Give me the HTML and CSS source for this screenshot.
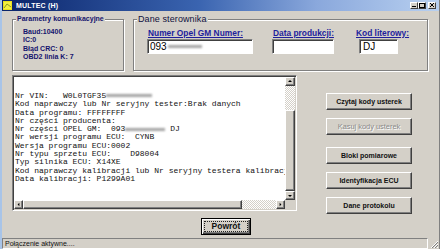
FILE: index.html
```html
<!DOCTYPE html>
<html lang="pl">
<head>
    <meta charset="utf-8">
    <title>MULTEC (H)</title>
    <link rel="stylesheet" href="styles.css">
</head>
<body>
    <div class="window">
        <div class="titlebar">
            <svg class="app-icon" width="9" height="9" viewBox="0 0 9 9">
                <rect x="0" y="0" width="9" height="9" fill="#e8e020"/>
                <rect x="1" y="1" width="7" height="7" fill="#f4f040"/>
                <path d="M1 7 L4 3 L8 6" stroke="#8a9a20" stroke-width="1" fill="none"/>
            </svg>
            <span class="title">MULTEC (H)</span>
            <div class="caption-buttons">
                <div class="cap-btn"><svg width="8" height="7" viewBox="0 0 8 7"><rect x="2" y="4" width="4" height="1" fill="#000"/></svg></div>
                <div class="cap-btn"><svg width="8" height="7" viewBox="0 0 8 7"><rect x="1.5" y="1.5" width="5" height="4" fill="none" stroke="#000"/><rect x="1" y="1" width="6" height="1" fill="#000"/></svg></div>
                <div class="cap-btn close"><svg width="8" height="7" viewBox="0 0 8 7"><path d="M2 1 L6 5 M6 1 L2 5" stroke="#000" stroke-width="1"/></svg></div>
            </div>
        </div>

        <div class="main">
            <div class="top-row">
                <fieldset class="group params">
                    <legend>Parametry komunikacyjne</legend>
                    <div class="params-list">
                        <p>Baud:10400</p>
                        <p>IC:0</p>
                        <p>Błąd CRC: 0</p>
                        <p>OBD2 linia K: 7</p>
                    </div>
                </fieldset>
                <fieldset class="group ecu">
                    <legend>Dane sterownika</legend>
                    <div class="ecu-fields">
                        <div class="field f-number">
                            <label>Numer Opel GM Numer:</label>
                            <div class="edit">093<span class="blur wide"></span></div>
                        </div>
                        <div class="field f-date">
                            <label>Data produkcji:</label>
                            <div class="edit"></div>
                        </div>
                        <div class="field f-code">
                            <label>Kod literowy:</label>
                            <div class="edit">DJ</div>
                        </div>
                    </div>
                </fieldset>
            </div>

            <div class="middle-row">
                <div class="left-col">
                    <div class="output">
                        <pre class="output-text">Nr VIN:   W0L0TGF35<span class="blur mono"></span>
Kod naprawczy lub Nr seryjny tester:Brak danych
Data programu: FFFFFFFF
Nr części producenta:
Nr części OPEL GM:  093<span class="blur mono short"></span> DJ
Nr wersji programu ECU:  CYNB
Wersja programu ECU:0002
Nr typu sprzetu ECU:    D98004
Typ silnika ECU: X14XE
Kod naprawczy kalibracji lub Nr seryjny testera kalibracji
Data kalibracji: P1299A01</pre>
                        <div class="vscroll">
                            <div class="arrow"><svg width="8" height="7" viewBox="0 0 8 7"><path d="M4 2 L6 4 L2 4 Z" fill="#000"/></svg></div>
                            <div class="track v-track-top"></div>
                            <div class="thumb"></div>
                            <div class="arrow"><svg width="8" height="7" viewBox="0 0 8 7"><path d="M2 3 L6 3 L4 5 Z" fill="#000"/></svg></div>
                        </div>
                        <div class="hscroll">
                            <div class="arrow"><svg width="8" height="7" viewBox="0 0 8 7"><path d="M5 1.5 L5 5.5 L3 3.5 Z" fill="#000"/></svg></div>
                            <div class="thumb"></div>
                            <div class="track h-track"></div>
                            <div class="arrow"><svg width="8" height="7" viewBox="0 0 8 7"><path d="M3 1.5 L3 5.5 L5 3.5 Z" fill="#000"/></svg></div>
                        </div>
                        <div class="corner"></div>
                    </div>
                    <div class="bottom-row">
                        <button class="win-btn default-btn"><span>Powrót</span></button>
                    </div>
                </div>

                <div class="actions">
                    <button class="win-btn">Czytaj kody usterek</button>
                    <button class="win-btn disabled">Kasuj kody usterek</button>
                    <button class="win-btn gap-big">Bloki pomiarowe</button>
                    <button class="win-btn">Identyfikacja ECU</button>
                    <button class="win-btn">Dane protokolu</button>
                </div>
            </div>
        </div>

        <div class="statusbar">
            <div class="status-panel">Połączenie aktywne....</div>
            <svg class="grip" width="10" height="10" viewBox="0 0 10 10">
                <path d="M9 2 L2 9 M9 5 L5 9 M9 8 L8 9" stroke="#fff" stroke-width="1"/>
                <path d="M9 3 L3 9 M9 6 L6 9" stroke="#808080" stroke-width="1"/>
            </svg>
        </div>
    </div>
</body>
</html>
```

FILE: styles.css
```css
body {
    margin: 0;
    background-color: #8fb0dc;
    font-family: 'Liberation Sans', Arial, sans-serif;
}

.window {
    width: 440px;
    height: 249px;
    box-sizing: border-box;
    background-color: #d4d0c8;
    border-left: 2px solid #a8c4e8;
    border-right: 1px solid #808080;
    display: flex;
    flex-direction: column;
    overflow: hidden;
}

/* title bar */
.titlebar {
    height: 11px;
    flex: none;
    display: flex;
    align-items: center;
    background: linear-gradient(to right, #0a246a 0%, #3a64b0 45%, #8aa8dc 72%, #b8d0f0 100%);
}

.app-icon {
    margin-left: 1px;
}

.title {
    margin-left: 4px;
    color: white;
    font-size: 7px;
    font-weight: bold;
    letter-spacing: 0.2px;
}

.caption-buttons {
    margin-left: auto;
    margin-right: 3px;
    display: flex;
}

.cap-btn {
    width: 8px;
    height: 7px;
    background-color: #d4d0c8;
    border: 1px solid;
    border-color: #fff #404040 #404040 #fff;
    box-sizing: border-box;
    display: flex;
    align-items: center;
    justify-content: center;
    overflow: hidden;
}

.cap-btn svg {
    flex: none;
}

.cap-btn.close {
    margin-left: 2px;
}

/* main area */
.main {
    flex: 1;
    min-height: 0;
    padding: 3px 0 0 10px;
    display: flex;
    flex-direction: column;
}

.top-row {
    display: flex;
    height: 57px;
    flex: none;
}

.group {
    margin: 0;
    padding: 0 0 0 3px;
    box-sizing: border-box;
    height: 57px;
    border: 1px solid #808080;
    box-shadow: 1px 1px 0 #fff, inset 1px 1px 0 #fff;
    min-width: 0;
}

.group legend {
    padding: 0 1px;
    background-color: #d4d0c8;
    line-height: 10px;
}

.params {
    width: 112px;
}

.params legend {
    font-size: 7px;
    font-weight: bold;
    color: #14146e;
}

.params-list {
    padding: 4px 0 0 7px;
}

.params-list p {
    margin: 0;
    font-size: 7px;
    font-weight: bold;
    line-height: 8.3px;
    color: #14146e;
}

.ecu {
    width: 295px;
    margin-left: 9px;
}

.ecu legend {
    font-size: 9px;
    color: #101040;
    letter-spacing: 0.1px;
}

.ecu-fields {
    display: flex;
    padding: 4px 0 0 10px;
}

.field label {
    display: block;
    font-size: 8.4px;
    font-weight: bold;
    line-height: 10px;
    color: #1e1e9c;
    text-decoration: underline;
    margin-left: 1px;
}

.edit {
    margin-top: 1px;
    height: 15px;
    box-sizing: border-box;
    background-color: white;
    border: 1px solid;
    border-color: #808080 #fff #fff #808080;
    box-shadow: inset 1px 1px 0 #404040;
    font-size: 10px;
    line-height: 13px;
    padding-left: 2px;
    display: flex;
    align-items: center;
}

.f-number {
    width: 125px;
}

.f-number .edit {
    width: 106px;
}

.f-date {
    width: 83px;
}

.f-date .edit {
    width: 62px;
}

.f-code .edit {
    width: 39px;
    margin-left: 4px;
    padding-left: 3px;
}

.blur {
    display: inline-block;
    background-color: #a4a4a4;
    filter: blur(1px);
    vertical-align: middle;
}

.blur.wide {
    width: 34px;
    height: 3px;
    margin-left: 1px;
}

.blur.mono {
    width: 46px;
    height: 3px;
}

.blur.mono.short {
    width: 40px;
}

/* output area */
.middle-row {
    display: flex;
    margin-top: 4px;
}

.left-col {
    display: flex;
    flex-direction: column;
}

.output {
    width: 285px;
    height: 136px;
    box-sizing: border-box;
    border: 1px solid;
    border-color: #808080 #fff #fff #808080;
    box-shadow: inset 1px 1px 0 #404040, inset -1px -1px 0 #d4d0c8;
    padding: 1px;
    display: grid;
    grid-template-columns: 1fr 10px;
    grid-template-rows: 1fr 9px;
}

.output-text {
    margin: 0;
    background-color: white;
    overflow: hidden;
    padding: 15px 0 0 1px;
    font-family: 'Liberation Mono', 'Courier New', monospace;
    font-size: 8px;
    line-height: 8.3px;
    color: #111;
}

.vscroll {
    display: flex;
    flex-direction: column;
}

.hscroll {
    display: flex;
}

.arrow {
    flex: none;
    width: 10px;
    height: 9px;
    box-sizing: border-box;
    background-color: #d4d0c8;
    border: 1px solid;
    border-color: #fff #404040 #404040 #fff;
    box-shadow: inset -1px -1px 0 #808080;
    display: flex;
    align-items: center;
    justify-content: center;
}

.hscroll .arrow {
    width: 9px;
}

.track {
    background-color: #ecebe6;
    background-image: repeating-conic-gradient(#fff 0 25%, #d4d0c8 0 50%);
    background-size: 2px 2px;
}

.v-track-top {
    height: 24px;
    flex: none;
}

.h-track {
    width: 34px;
    flex: none;
}

.thumb {
    flex: 1;
    box-sizing: border-box;
    background-color: #d4d0c8;
    border: 1px solid;
    border-color: #fff #404040 #404040 #fff;
    box-shadow: inset -1px -1px 0 #808080;
}

.corner {
    background-color: #d4d0c8;
}

/* buttons */
.actions {
    margin-left: 29px;
    padding-top: 18px;
    display: flex;
    flex-direction: column;
    gap: 8px;
}

.win-btn {
    width: 86px;
    height: 17px;
    padding: 0;
    box-sizing: border-box;
    background-color: #d4d0c8;
    border: 1px solid;
    border-color: #fff #404040 #404040 #fff;
    box-shadow: inset -1px -1px 0 #808080;
    font-family: 'Liberation Sans', Arial, sans-serif;
    font-size: 7px;
    font-weight: bold;
    color: #111;
}

.win-btn.disabled {
    color: #8a8a8a;
    text-shadow: 1px 1px 0 #fff;
    font-weight: normal;
    font-size: 7.4px;
}

.win-btn.gap-big {
    margin-top: 4px;
}

.bottom-row {
    margin-top: 4px;
    padding-left: 189px;
}

.default-btn {
    width: 50px;
    border: 1px solid #000;
    box-shadow: inset 1px 1px 0 #fff, inset -1px -1px 0 #404040, inset -2px -2px 0 #808080;
    font-size: 8.5px;
    padding: 2px;
}

.default-btn span {
    display: block;
    height: 100%;
    box-sizing: border-box;
    border: 1px dotted #222;
    line-height: 9px;
}

/* status bar */
.statusbar {
    height: 12px;
    flex: none;
    display: flex;
    align-items: flex-end;
}

.status-panel {
    flex: 1;
    height: 11px;
    box-sizing: border-box;
    border: 1px solid;
    border-color: #808080 #fff #fff #808080;
    font-size: 7px;
    line-height: 9px;
    padding-left: 2px;
    color: #111;
}

.grip {
    flex: none;
    margin-left: 1px;
}
```
